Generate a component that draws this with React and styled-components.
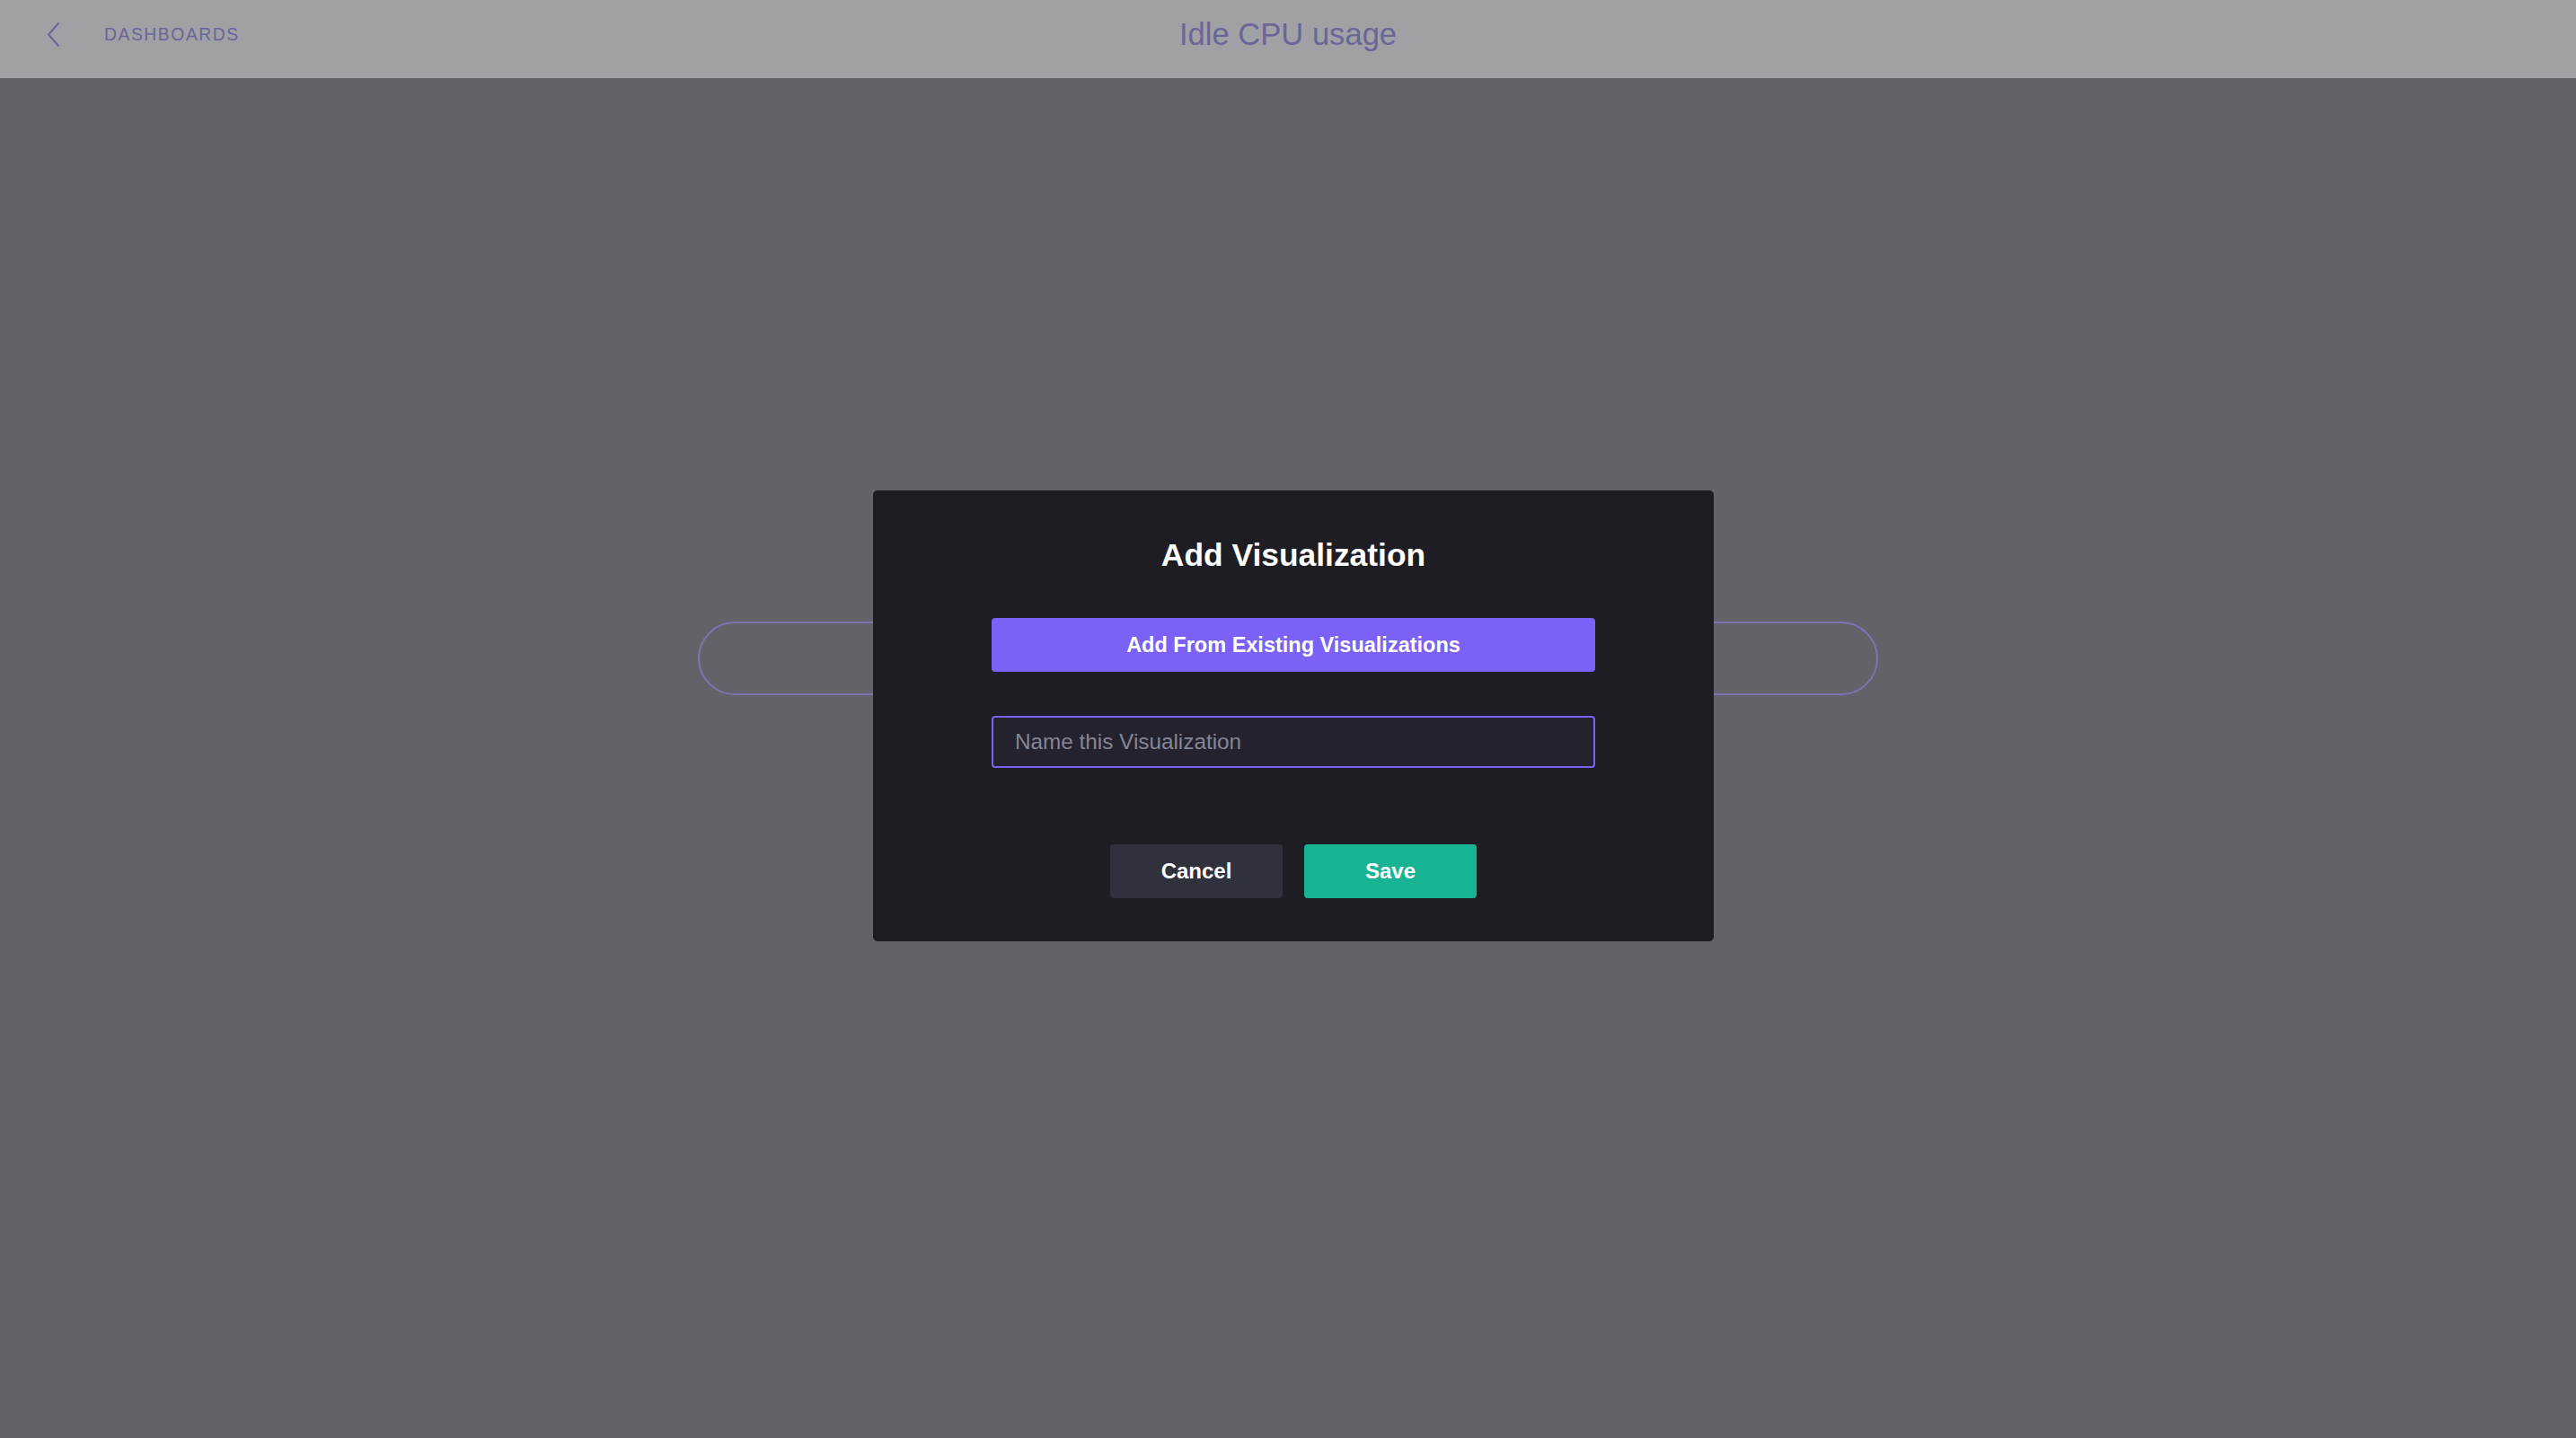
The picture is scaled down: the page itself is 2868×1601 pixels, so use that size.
import React from "react";
import styled, { createGlobalStyle } from "styled-components";

const GlobalStyle = createGlobalStyle`
  html, body {
    margin: 0;
    padding: 0;
    background: #626369;
    font-family: "Liberation Sans", Arial, Helvetica, sans-serif;
  }
  * {
    box-sizing: border-box;
  }
`;

const Page = styled.div`
  min-height: 100vh;
  background: #626369;
`;

const Header = styled.header`
  height: 87px;
  background: #a0a1a5;
  display: grid;
  grid-template-columns: 1fr auto 1fr;
  align-items: center;
  padding: 0 52px 10px;
`;

const BackLink = styled.a`
  display: flex;
  align-items: center;
  gap: 49px;
  color: #6a6697;
  text-decoration: none;
  font-size: 19.4px;
  letter-spacing: 1.5px;
  text-transform: uppercase;
  cursor: pointer;

  svg {
    margin-top: -1px;
  }
`;

const Title = styled.h1`
  margin: 0;
  font-size: 34.6px;
  font-weight: 400;
  color: #6a6697;
`;

const Main = styled.main`
  display: flex;
  justify-content: center;
  padding-top: 605px;
`;

const Pill = styled.div`
  width: 1314px;
  height: 82px;
  border: 2px solid #7a75b0;
  border-radius: 41px;
`;

const Overlay = styled.div`
  position: fixed;
  inset: 0;
  display: flex;
  align-items: center;
  justify-content: center;
  padding: 0 0 7px 12px;
`;

const Modal = styled.div`
  width: 936px;
  background: #1e1d23;
  border-radius: 5px;
  padding: 52px 132px 48px;
  display: flex;
  flex-direction: column;
  align-items: stretch;
`;

const ModalTitle = styled.h2`
  margin: 0 0 50px;
  text-align: center;
  color: #ffffff;
  font-size: 35.4px;
  line-height: 40px;
  font-weight: 700;
`;

const Button = styled.button`
  height: 60px;
  border: none;
  border-radius: 4px;
  background: ${(p) => p.bg};
  color: #ffffff;
  font-family: inherit;
  font-size: ${(p) => (p.wide ? "23.5px" : "24px")};
  font-weight: 700;
  cursor: pointer;
  width: ${(p) => (p.wide ? "100%" : "192px")};
`;

const NameInput = styled.input`
  margin-top: 49px;
  height: 58px;
  width: 100%;
  background: #23222e;
  border: 2px solid #7b61f5;
  border-radius: 4px;
  padding: 0 24px;
  color: #ffffff;
  caret-color: #ffffff;
  font-family: inherit;
  font-size: 24.3px;
  outline: none;

  &::placeholder {
    color: #868594;
  }
`;

const Actions = styled.div`
  margin-top: 85px;
  display: flex;
  justify-content: center;
  gap: 24px;
`;

const ChevronLeft = () => (
  <svg width="15" height="27" viewBox="0 0 15 27" fill="none">
    <polyline
      points="13,1 2,13.5 13,26"
      stroke="#6a6697"
      strokeWidth="2"
      strokeLinecap="round"
      strokeLinejoin="round"
    />
  </svg>
);

const App = () => {
  return (
    <>
      <GlobalStyle />
      <Page>
        <Header>
          <BackLink>
            <ChevronLeft />
            Dashboards
          </BackLink>
          <Title>Idle CPU usage</Title>
          <div />
        </Header>
        <Main>
          <Pill />
        </Main>
      </Page>
      <Overlay>
        <Modal>
          <ModalTitle>Add Visualization</ModalTitle>
          <Button wide bg="#7b61f5">
            Add From Existing Visualizations
          </Button>
          <NameInput placeholder="Name this Visualization" autoFocus />
          <Actions>
            <Button bg="#31303d">Cancel</Button>
            <Button bg="#17b494">Save</Button>
          </Actions>
        </Modal>
      </Overlay>
    </>
  );
};

export default App;
